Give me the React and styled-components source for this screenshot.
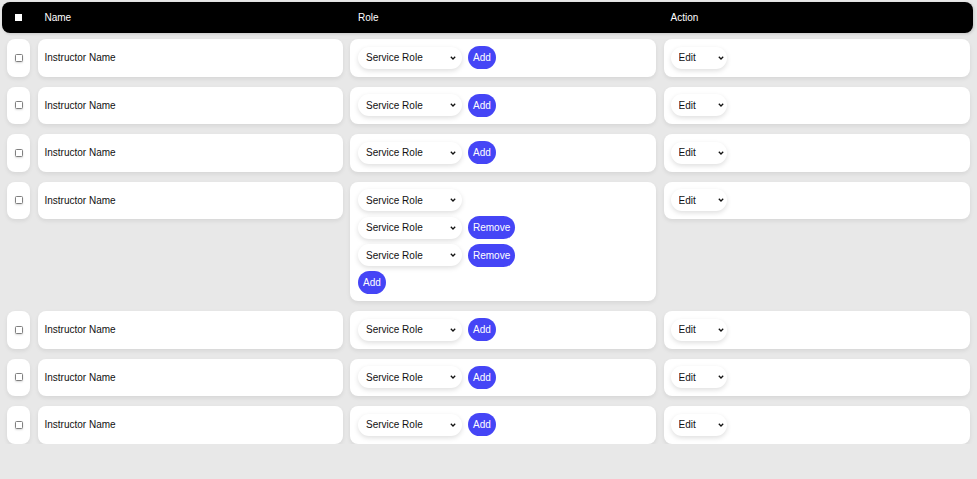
import React from "react";
import styled, { createGlobalStyle } from "styled-components";

const Global = createGlobalStyle`
  html, body { margin: 0; padding: 0; background: #e8e8e8; }
  body { font-family: Arial, "Liberation Sans", sans-serif; font-size: 10px; color: #111; }
`;

const Page = styled.div`
  padding: 2px 4px 0 2px;
  display: flex;
  flex-direction: column;
  gap: 6px;
`;

const cols = "23px 305px 306px 306px";

const Header = styled.div`
  display: grid;
  grid-template-columns: ${cols};
  column-gap: 7.5px;
  align-items: center;
  height: 31px;
  padding-left: 5px;
  background: #000;
  border-radius: 8px;
  color: #fff;
  box-shadow: 1px 1px 3px rgba(0,0,0,0.15);
`;

const HeadCell = styled.div`
  padding-left: ${(p) => p.$pad || 7}px;
  display: flex;
  align-items: center;
`;

const Rows = styled.div`
  display: flex;
  flex-direction: column;
  gap: 10px;
  padding-left: 5px;
`;

const Row = styled.div`
  display: grid;
  grid-template-columns: ${cols};
  column-gap: 7.5px;
  align-items: start;
`;

const Cell = styled.div`
  background: #fff;
  border-radius: 8px;
  box-shadow: 0 2px 4px rgba(0,0,0,0.08);
  min-height: 37.5px;
  box-sizing: border-box;
  padding: 7px ${(p) => p.$px ?? 8}px;
  display: flex;
  flex-direction: column;
  justify-content: flex-start;
  align-items: ${(p) => (p.$center ? "center" : "stretch")};
  gap: 4.5px;
`;

const Line = styled.div`
  height: 23px;
  display: flex;
  align-items: center;
  gap: 6px;
`;

const Check = styled.span`
  display: inline-block;
  width: ${(p) => (p.$head ? 7 : 8)}px;
  height: ${(p) => (p.$head ? 7 : 8)}px;
  box-sizing: border-box;
  border: 1px solid ${(p) => (p.$head ? "#fff" : "#808080")};
  background: #fff;
  border-radius: ${(p) => (p.$head ? "0" : "1.5px")};
  box-shadow: ${(p) => (p.$head ? "none" : "0 1px 2px rgba(0,0,0,0.15)")};
`;

const SelectWrap = styled.span`
  position: relative;
  display: inline-flex;
  align-items: center;
  width: ${(p) => p.$w}px;
  height: 22px;
`;

const Select = styled.select`
  appearance: none;
  -webkit-appearance: none;
  font-family: Arial, "Liberation Sans", sans-serif;
  font-size: 10px;
  color: #111;
  height: 22px;
  width: 100%;
  border: none;
  border-radius: 11px;
  background: #fff;
  padding: 0 14px 0 8px;
  box-shadow: 0 2px 5px rgba(0,0,0,0.13);
  outline: none;
`;

const Chevron = styled.svg`
  position: absolute;
  right: ${(p) => p.$r}px;
  top: 50%;
  margin-top: -2px;
  pointer-events: none;
`;

const Btn = styled.button`
  font-family: Arial, "Liberation Sans", sans-serif;
  font-size: 10px;
  color: #fff;
  background: #4545f6;
  border: none;
  height: 23px;
  border-radius: 12px;
  padding: 0 5px;
  cursor: pointer;
`;

const Name = styled.span`
  color: #111;
`;

const Dropdown = ({ w, r, label }) => (
  <SelectWrap $w={w}>
    <Select defaultValue="v">
      <option value="v">{label}</option>
    </Select>
    <Chevron $r={r} width="6" height="4" viewBox="0 0 6 4">
      <path d="M0.8 0.8 L3 3 L5.2 0.8" fill="none" stroke="#111" strokeWidth="1.3" />
    </Chevron>
  </SelectWrap>
);

const RoleSelect = () => <Dropdown w={104} r={6} label="Service Role" />;

const rows = [1, 1, 1, 3, 1, 1, 1];

export default function App() {
  return (
    <>
      <Global />
      <Page>
        <Header>
          <HeadCell $pad={8}>
            <Check $head />
          </HeadCell>
          <HeadCell>Name</HeadCell>
          <HeadCell $pad={8}>Role</HeadCell>
          <HeadCell>Action</HeadCell>
        </Header>
        <Rows>
          {rows.map((n, i) => (
            <Row key={i}>
              <Cell $px={0} $center>
                <Line>
                  <Check />
                </Line>
              </Cell>
              <Cell $px={7}>
                <Line>
                  <Name>Instructor Name</Name>
                </Line>
              </Cell>
              <Cell>
                {n === 1 ? (
                  <Line>
                    <RoleSelect />
                    <Btn>Add</Btn>
                  </Line>
                ) : (
                  <>
                    <Line>
                      <RoleSelect />
                    </Line>
                    <Line>
                      <RoleSelect />
                      <Btn>Remove</Btn>
                    </Line>
                    <Line>
                      <RoleSelect />
                      <Btn>Remove</Btn>
                    </Line>
                    <Line>
                      <Btn>Add</Btn>
                    </Line>
                  </>
                )}
              </Cell>
              <Cell $px={7}>
                <Line>
                  <Dropdown w={56} r={3} label="Edit" />
                </Line>
              </Cell>
            </Row>
          ))}
        </Rows>
      </Page>
    </>
  );
}
